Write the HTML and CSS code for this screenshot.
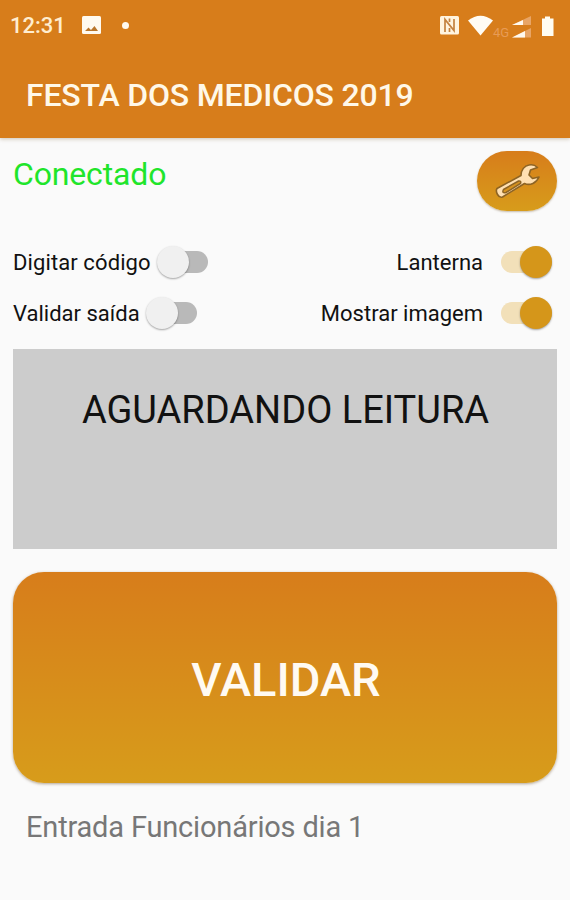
FILE: index.html
```html
<!DOCTYPE html>
<html lang="pt-BR">

<head>
    <meta charset="UTF-8">
    <meta name="viewport" content="width=device-width, initial-scale=1.0">
    <title>Festa dos Medicos 2019</title>
    <link rel="stylesheet" href="styles.css">
</head>

<body>
    <header class="header">
        <div class="status-bar">
            <span class="clock">12:31</span>
            <svg class="icon-image" width="19" height="19" viewBox="0 0 19 19">
                <rect width="19" height="18" rx="1.5" fill="#fffaf0"/>
                <path d="M3 15l3.500-3.500 2.500 2.500 3.500-4L16 15z" fill="#b9762c"/>
            </svg>
            <span class="dot"></span>
            <svg class="status-icons" width="116" height="24" viewBox="0 0 116 24">
                <rect x="0" y="2" width="19" height="18.500" rx="1.500" fill="#fff4df"/>
                <path d="M5 18V5.500L14 16.500V5M9.500 4.500V8M9.500 14v4" fill="none" stroke="#c48240" stroke-width="1.700"/>
                <path d="M28 6.500Q40.500-3 53 6.500L40.500 21.500z" fill="#fffcf4"/>
                <text x="53" y="22.500" class="network">4G</text>
                <path d="M72 11L91 2v9z" fill="#e8a566"/>
                <path d="M72 11l11-5v5z" fill="#fff9ee"/>
                <path d="M72 23.500l19-9.500v9.500z" fill="#e8a566"/>
                <path d="M72 23.500l13-6.500v6.500z" fill="#fff9ee"/>
                <path d="M102 4.500h3V2.500h5v2h3.500V22H102z" fill="#fffdf2"/>
            </svg>
        </div>
        <h1>FESTA DOS MEDICOS 2019</h1>
    </header>

    <main class="content">
        <div class="top-row">
            <p class="connection">Conectado</p>
            <button type="button" class="settings-btn" aria-label="Configurações">
                <svg width="48" height="36" viewBox="0 0 48 36">
                    <path d="M4 25.500L28 12.500C28 7 31.500 2.500 36 2Q41 1 44.500 4.500L37.500 7 36 12 39.500 15.500 46 14C43.500 20 37 23 31.500 20.500L9.500 34Q6.500 35 4.500 31.500T4 25.500z" fill="#ffe0b2" stroke="#8d6425" stroke-width="1.600" stroke-linejoin="round"/>
                    <path d="M10.500 26.500L25.500 18Q28.500 17.500 27.500 20.500L13 29.500Q8.500 30.500 10.500 26.500z" fill="#d6921f" stroke="#8d6425" stroke-width="1.500"/>
                </svg>
            </button>
        </div>

        <div class="options">
            <label class="option">
                <span class="code-label">Digitar código</span>
                <span class="switch"></span>
            </label>
            <label class="option option-right">
                <span>Lanterna</span>
                <span class="switch on"></span>
            </label>
            <label class="option">
                <span>Validar saída</span>
                <span class="switch"></span>
            </label>
            <label class="option option-right">
                <span>Mostrar imagem</span>
                <span class="switch on"></span>
            </label>
        </div>

        <div class="reading">AGUARDANDO LEITURA</div>

        <button type="button" class="validate-btn">VALIDAR</button>

        <p class="entry">Entrada Funcionários dia 1</p>
    </main>
</body>

</html>
```
FILE: styles.css
```css
* {
    margin: 0;
    padding: 0;
    box-sizing: border-box;
}

body {
    font-family: Roboto, 'Liberation Sans', sans-serif;
    background: #fafafa;
    color: #111;
    height: 900px;
    overflow: hidden;
}

.header {
    height: 138px;
    background: #d77d1b;
    color: #fff8e8;
    box-shadow: 0 1px 4px rgba(100, 70, 20, 0.3);
}

.status-bar {
    display: flex;
    align-items: center;
    height: 51px;
    padding: 0 14px 0 10px;
}

.clock {
    width: 72px;
    font-size: 22px;
    font-weight: 500;
    color: #ffedcf;
}

.dot {
    width: 7px;
    height: 7px;
    margin-left: 21px;
    border-radius: 50%;
    background: #fffaf0;
}

.status-icons {
    margin-left: auto;
}

.network {
    font-size: 13px;
    fill: #e79b55;
}

.header h1 {
    padding-left: 26px;
    font-size: 32px;
    font-weight: 500;
    line-height: 88px;
    letter-spacing: -0.18px;
    white-space: nowrap;
}

.content {
    padding: 13px 13px 0;
}

.top-row {
    display: flex;
    justify-content: space-between;
    height: 86px;
}

.connection {
    font-size: 32px;
    line-height: 46px;
    letter-spacing: -0.15px;
    color: #1fe52b;
}

.settings-btn {
    display: flex;
    align-items: center;
    justify-content: center;
    width: 80px;
    height: 60px;
    border: none;
    border-radius: 30px;
    background: linear-gradient(#d77d1b, #d79c1b);
    box-shadow: 0 1px 2px rgba(100, 70, 20, 0.35);
}

.options {
    display: grid;
    grid-template-columns: 1fr 1fr;
    grid-auto-rows: 51px;
    height: 112px;
}

.option {
    display: flex;
    align-items: center;
    gap: 6px;
    height: 51px;
    font-size: 22px;
    white-space: nowrap;
}

.option-right {
    justify-content: flex-end;
    gap: 18px;
    padding-right: 5px;
}

.code-label {
    letter-spacing: 0.1px;
}

.switch {
    display: flex;
    align-items: center;
    width: 46px;
    height: 22px;
    margin-left: 5px;
    margin-bottom: 2px;
    border-radius: 11px;
    background: #b9b9b9;
}

.switch::before {
    content: '';
    flex: none;
    width: 32px;
    height: 32px;
    margin-left: -5px;
    border-radius: 50%;
    background: #f0f0f0;
    box-shadow: 0 1px 2px rgba(0, 0, 0, 0.35);
}

.switch.on {
    width: 51px;
    margin-left: 0;
    background: #f2e0b9;
}

.switch.on::before {
    margin-left: 19px;
    background: #d5961a;
}

.reading {
    height: 200px;
    padding-left: 1px;
    background: #ccc;
    font-size: 38px;
    line-height: 122px;
    text-align: center;
    white-space: nowrap;
}

.validate-btn {
    display: block;
    width: 100%;
    height: 211px;
    margin-top: 23px;
    padding: 3px 0 0 2px;
    border: none;
    border-radius: 31px;
    background: linear-gradient(#d77d1b, #d79c1b);
    box-shadow: 0 1px 3px rgba(90, 60, 20, 0.45);
    color: #fffaf2;
    font-family: inherit;
    font-size: 47px;
    font-weight: 500;
}

.entry {
    margin-top: 26px;
    padding-left: 13px;
    font-size: 29px;
    line-height: 36px;
    letter-spacing: -0.18px;
    color: #777;
    white-space: nowrap;
}
```
